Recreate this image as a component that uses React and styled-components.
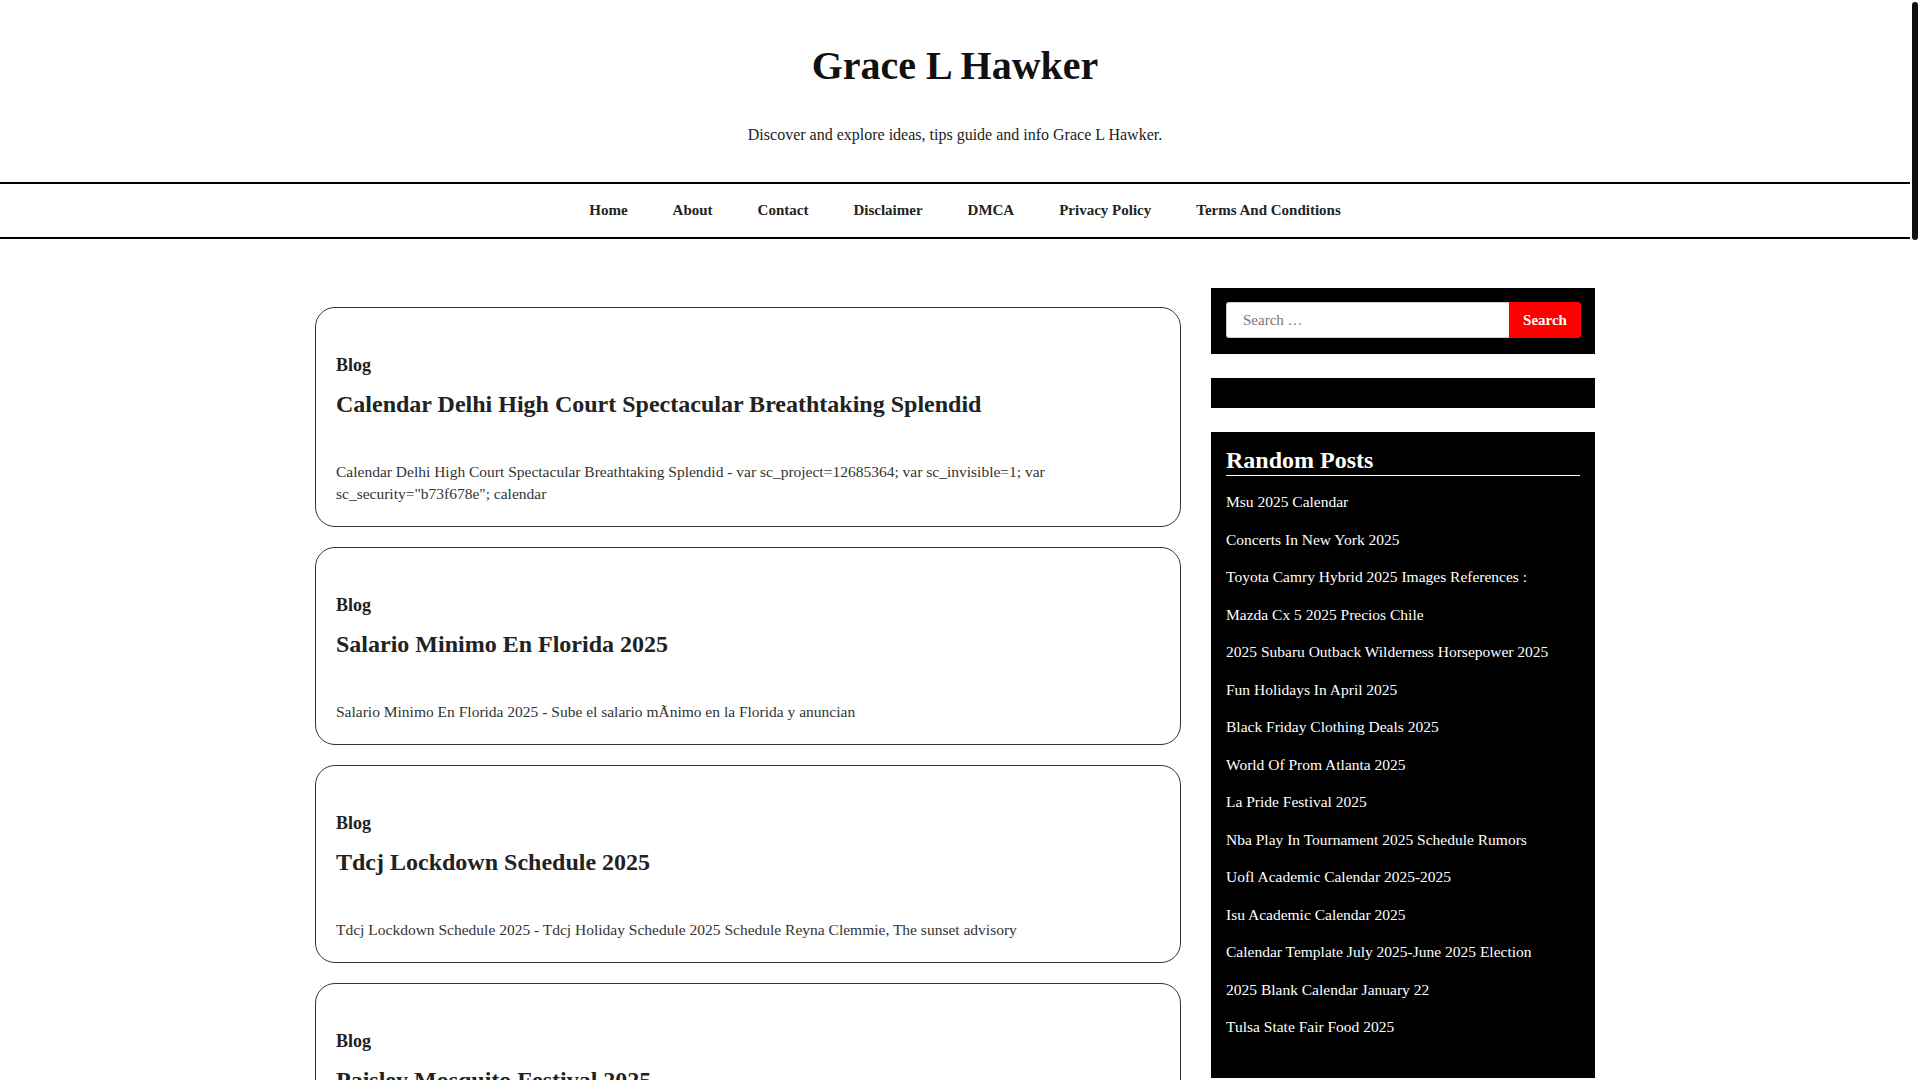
import React from 'react';
import styled, { createGlobalStyle } from 'styled-components';

const GlobalStyle = createGlobalStyle`
  html {
    scrollbar-width: none;
  }
  html, body {
    margin: 0;
    padding: 0;
    background: #ffffff;
    font-family: "Liberation Serif", "Times New Roman", serif;
    color: #222;
  }
  ::-webkit-scrollbar {
    display: none;
  }
  a {
    color: inherit;
    text-decoration: none;
  }
`;

const Page = styled.div`
  margin-right: 10px;
`;

// page scrollbar thumb as drawn in the screenshot
const ScrollThumb = styled.div`
  position: fixed;
  top: 2px;
  right: 2px;
  width: 6px;
  height: 238px;
  border-radius: 3px;
  background: #111;
  z-index: 10;
`;

const Header = styled.header`
  padding: 42px 0 35px;
  text-align: center;
`;

const SiteTitle = styled.h1`
  margin: 0;
  font-size: 40px;
  line-height: 48px;
  font-weight: 700;
  color: #111;
`;

const Tagline = styled.p`
  margin: 33px 0 0;
  font-size: 16px;
  line-height: 24px;
  color: #222;
`;

const Nav = styled.nav`
  border-top: 2px solid #000;
  border-bottom: 2px solid #000;
`;

const NavList = styled.ul`
  list-style: none;
  margin: 0;
  padding: 0 0 0 20px;
  height: 53px;
  display: flex;
  align-items: center;
  justify-content: center;
  gap: 45px;
`;

const NavItem = styled.li`
  font-size: 15px;
  font-weight: 700;
  color: #222;
`;

const Main = styled.main`
  width: 1280px;
  margin: 0 auto;
  padding: 49px 0 60px;
  display: flex;
  align-items: flex-start;
  gap: 30px;
`;

const Posts = styled.div`
  flex: 1;
  padding-top: 19px;
  display: flex;
  flex-direction: column;
  gap: 20px;
`;

const Card = styled.article`
  border: 1px solid #333;
  border-radius: 20px;
  padding: 44px 20px 21px;
`;

const Category = styled.a`
  display: block;
  font-size: 18px;
  line-height: 27px;
  font-weight: 700;
  color: #222;
`;

const PostTitle = styled.h2`
  margin: 10px 0 0;
  font-size: 24px;
  line-height: 31px;
  font-weight: 700;
  color: #222;
`;

const Excerpt = styled.p`
  margin: 41px 0 0;
  font-size: 15.5px;
  line-height: 22px;
  color: #333;
  padding-right: 60px;
`;

const Sidebar = styled.aside`
  width: 384px;
  flex-shrink: 0;
  display: flex;
  flex-direction: column;
  gap: 24px;
`;

const Widget = styled.section`
  background: #000;
  color: #fff;
  padding: ${props => props.$pad || '15px'};
`;

const SearchForm = styled.form`
  display: flex;
  height: 36px;
`;

const SearchInput = styled.input`
  flex: 1;
  min-width: 0;
  box-sizing: border-box;
  border: 1px solid #ccc;
  border-right: none;
  border-radius: 3px 0 0 3px;
  padding: 0 16px;
  font-family: "Liberation Serif", serif;
  font-size: 15px;
  background: #fff;
  color: #333;
  outline: none;

  &::placeholder {
    color: #777;
  }
`;

const SearchButton = styled.button`
  width: 72px;
  border: none;
  border-radius: 0 3px 3px 0;
  background: #ff0000;
  color: #fff;
  font-family: "Liberation Serif", serif;
  font-size: 15px;
  font-weight: 700;
  cursor: pointer;
`;

const WidgetTitle = styled.h3`
  margin: 0;
  font-size: 24px;
  line-height: 26px;
  font-weight: 700;
  padding-bottom: 2px;
  border-bottom: 1px solid #fff;
`;

const RandomList = styled.ul`
  list-style: none;
  margin: 15px 0 0;
  padding: 0;
`;

const RandomItem = styled.li`
  font-size: 15.5px;
  line-height: 22.5px;
  margin-bottom: 15px;
  color: #fff;
`;

const Footer = styled.footer`
  border-top: 2px solid #000;
  padding: 30px 0;
  text-align: center;
  font-size: 15px;
`;

const menu = ['Home', 'About', 'Contact', 'Disclaimer', 'DMCA', 'Privacy Policy', 'Terms And Conditions'];

const posts = [
  {
    title: 'Calendar Delhi High Court Spectacular Breathtaking Splendid',
    excerpt: 'Calendar Delhi High Court Spectacular Breathtaking Splendid - var sc_project=12685364; var sc_invisible=1; var sc_security="b73f678e"; calendar'
  },
  {
    title: 'Salario Minimo En Florida 2025',
    excerpt: 'Salario Minimo En Florida 2025 - Sube el salario mÃnimo en la Florida y anuncian'
  },
  {
    title: 'Tdcj Lockdown Schedule 2025',
    excerpt: 'Tdcj Lockdown Schedule 2025 - Tdcj Holiday Schedule 2025 Schedule Reyna Clemmie, The sunset advisory'
  },
  {
    title: 'Paisley Mosquito Festival 2025',
    excerpt: 'Paisley Mosquito Festival 2025 - Paisley Mosquito Festival 2025 Schedule, The festival returns to downtown'
  },
  {
    title: 'Msu 2025 Calendar',
    excerpt: 'Msu 2025 Calendar - Michigan State University academic calendar for the 2025 semesters'
  },
  {
    title: 'Concerts In New York 2025',
    excerpt: 'Concerts In New York 2025 - Upcoming concerts and live music events in New York City'
  },
  {
    title: 'Mazda Cx 5 2025 Precios Chile',
    excerpt: 'Mazda Cx 5 2025 Precios Chile - Conoce los precios y versiones del nuevo Mazda'
  },
  {
    title: 'Fun Holidays In April 2025',
    excerpt: 'Fun Holidays In April 2025 - A list of fun and unusual holidays to celebrate this April'
  },
  {
    title: 'Black Friday Clothing Deals 2025',
    excerpt: 'Black Friday Clothing Deals 2025 - The best clothing deals to shop this Black Friday'
  },
  {
    title: 'World Of Prom Atlanta 2025',
    excerpt: 'World Of Prom Atlanta 2025 - Prom dresses and fashion show in Atlanta, Georgia'
  },
  {
    title: 'La Pride Festival 2025',
    excerpt: 'La Pride Festival 2025 - Dates, lineup and tickets for the LA Pride festival'
  },
  {
    title: 'Isu Academic Calendar 2025',
    excerpt: 'Isu Academic Calendar 2025 - Important dates and deadlines for the academic year'
  },
  {
    title: '2025 Blank Calendar January 22',
    excerpt: '2025 Blank Calendar January 22 - Free printable blank calendar templates for 2025'
  },
  {
    title: 'Tulsa State Fair Food 2025',
    excerpt: 'Tulsa State Fair Food 2025 - All the new fair foods coming to the Tulsa State Fair'
  },
  {
    title: 'Uofl Academic Calendar 2025-2025',
    excerpt: 'Uofl Academic Calendar 2025-2025 - University of Louisville academic calendar'
  },
  {
    title: 'Nba Play In Tournament 2025 Schedule Rumors',
    excerpt: 'Nba Play In Tournament 2025 Schedule Rumors - Latest rumors on the play in schedule'
  },
  {
    title: 'Toyota Camry Hybrid 2025 Images References',
    excerpt: 'Toyota Camry Hybrid 2025 Images References - Exterior and interior photo gallery'
  },
  {
    title: '2025 Subaru Outback Wilderness Horsepower 2025',
    excerpt: '2025 Subaru Outback Wilderness Horsepower 2025 - Engine specs and performance'
  }
];

const randomPosts = [
  'Msu 2025 Calendar',
  'Concerts In New York 2025',
  'Toyota Camry Hybrid 2025 Images References :',
  'Mazda Cx 5 2025 Precios Chile',
  '2025 Subaru Outback Wilderness Horsepower 2025',
  'Fun Holidays In April 2025',
  'Black Friday Clothing Deals 2025',
  'World Of Prom Atlanta 2025',
  'La Pride Festival 2025',
  'Nba Play In Tournament 2025 Schedule Rumors',
  'Uofl Academic Calendar 2025-2025',
  'Isu Academic Calendar 2025',
  'Calendar Template July 2025-June 2025 Election',
  '2025 Blank Calendar January 22',
  'Tulsa State Fair Food 2025'
];

const App = () => {
  return (
    <Page>
      <GlobalStyle />
      <ScrollThumb />
      <Header>
        <SiteTitle>Grace L Hawker</SiteTitle>
        <Tagline>Discover and explore ideas, tips guide and info Grace L Hawker.</Tagline>
      </Header>
      <Nav>
        <NavList>
          {menu.map(item => (
            <NavItem key={item}><a href="#">{item}</a></NavItem>
          ))}
        </NavList>
      </Nav>
      <Main>
        <Posts>
          {posts.map(post => (
            <Card key={post.title}>
              <Category href="#">Blog</Category>
              <PostTitle>{post.title}</PostTitle>
              <Excerpt>{post.excerpt}</Excerpt>
            </Card>
          ))}
        </Posts>
        <Sidebar>
          <Widget $pad="14px 14px 16px 15px">
            <SearchForm onSubmit={e => e.preventDefault()}>
              <SearchInput type="search" placeholder="Search …" />
              <SearchButton type="submit">Search</SearchButton>
            </SearchForm>
          </Widget>
          <Widget $pad="15px" />
          <Widget $pad="15px 15px 24px">
            <WidgetTitle>Random Posts</WidgetTitle>
            <RandomList>
              {randomPosts.map(item => (
                <RandomItem key={item}><a href="#">{item}</a></RandomItem>
              ))}
            </RandomList>
          </Widget>
        </Sidebar>
      </Main>
      <Footer>© 2025 Grace L Hawker</Footer>
    </Page>
  );
};

export default App;
